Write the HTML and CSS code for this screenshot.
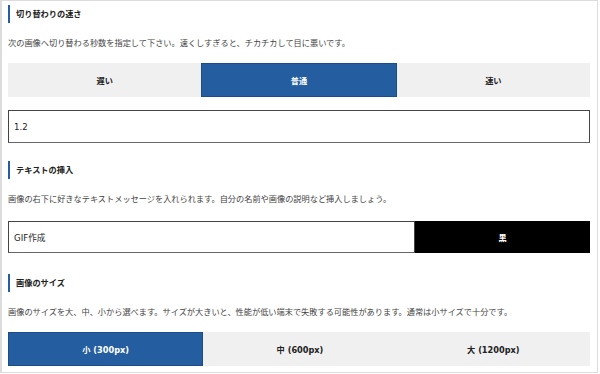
FILE: index.html
```html
<!DOCTYPE html>
<html lang="ja">
<head>
    <meta charset="UTF-8">
    <meta name="viewport" content="width=device-width, initial-scale=1.0">
    <title>GIF作成</title>
    <link rel="stylesheet" href="styles.css">
</head>
<body>
    <div class="panel">
        <section class="setting">
            <h2 class="setting-title">切り替わりの速さ</h2>
            <p class="setting-desc">次の画像へ切り替わる秒数を指定して下さい。速くしすぎると、チカチカして目に悪いです。</p>
            <div class="choices">
                <button class="choice">遅い</button>
                <button class="choice active">普通</button>
                <button class="choice">速い</button>
            </div>
            <input class="field speed" type="text" value="1.2">
        </section>

        <section class="setting">
            <h2 class="setting-title">テキストの挿入</h2>
            <p class="setting-desc">画像の右下に好きなテキストメッセージを入れられます。自分の名前や画像の説明など挿入しましょう。</p>
            <div class="text-row">
                <input class="field" type="text" value="GIF作成">
                <button class="color-btn">黒</button>
            </div>
        </section>

        <section class="setting">
            <h2 class="setting-title">画像のサイズ</h2>
            <p class="setting-desc">画像のサイズを大、中、小から選べます。サイズが大きいと、性能が低い端末で失敗する可能性があります。通常は小サイズで十分です。</p>
            <div class="choices">
                <button class="choice active">小 (300px)</button>
                <button class="choice">中 (600px)</button>
                <button class="choice">大 (1200px)</button>
            </div>
        </section>
    </div>
</body>
</html>
```

FILE: styles.css
```css
body {
    font-family: "DejaVu Sans", "Noto Sans CJK JP", sans-serif;
    color: #333;
    background-color: #fff;
    margin: 0;
    padding: 0;
}

.panel {
    width: 598px;
    height: 373px;
    box-sizing: border-box;
    border: 1px solid #dcdcdc;
    border-left-width: 2px;
    padding: 4px 7px 0 6px;
    overflow: hidden;
}

.setting {
    margin-bottom: 18px;
}

.setting:nth-child(2) {
    margin-bottom: 21px;
}

.setting-title {
    margin: 0;
    height: 18px;
    line-height: 18px;
    border-left: 2px solid #245ea0;
    padding-left: 6px;
    font-size: 8.2px;
    font-weight: bold;
    color: #222;
}

.setting-desc {
    margin: 13px 0;
    font-size: 8.2px;
    line-height: 14px;
    color: #444;
}

.choices {
    display: flex;
    height: 34px;
    margin-bottom: 13px;
}

.choice {
    flex: 1;
    background-color: #f0f0f0;
    border: none;
    margin: 0;
    padding: 0;
    font-family: inherit;
    font-size: 8.2px;
    font-weight: bold;
    color: #222;
}

.choice.active {
    background-color: #245ea0;
    border: 1px solid #1b4d88;
    color: #fff;
}

.field {
    display: block;
    width: 100%;
    height: 33px;
    box-sizing: border-box;
    border: 1px solid #444;
    border-bottom-color: #666;
    padding: 0 5px;
    margin: 0;
    font-family: inherit;
    font-size: 8.6px;
    color: #222;
    outline: none;
}

.text-row {
    display: flex;
    height: 32px;
    margin-top: 15px;
}

.text-row .field {
    flex: 0 0 407px;
    height: 32px;
}

.color-btn {
    flex: 1;
    background-color: #000;
    border: none;
    margin: 0;
    font-family: inherit;
    font-size: 8.2px;
    font-weight: bold;
    color: #fff;
}
```
